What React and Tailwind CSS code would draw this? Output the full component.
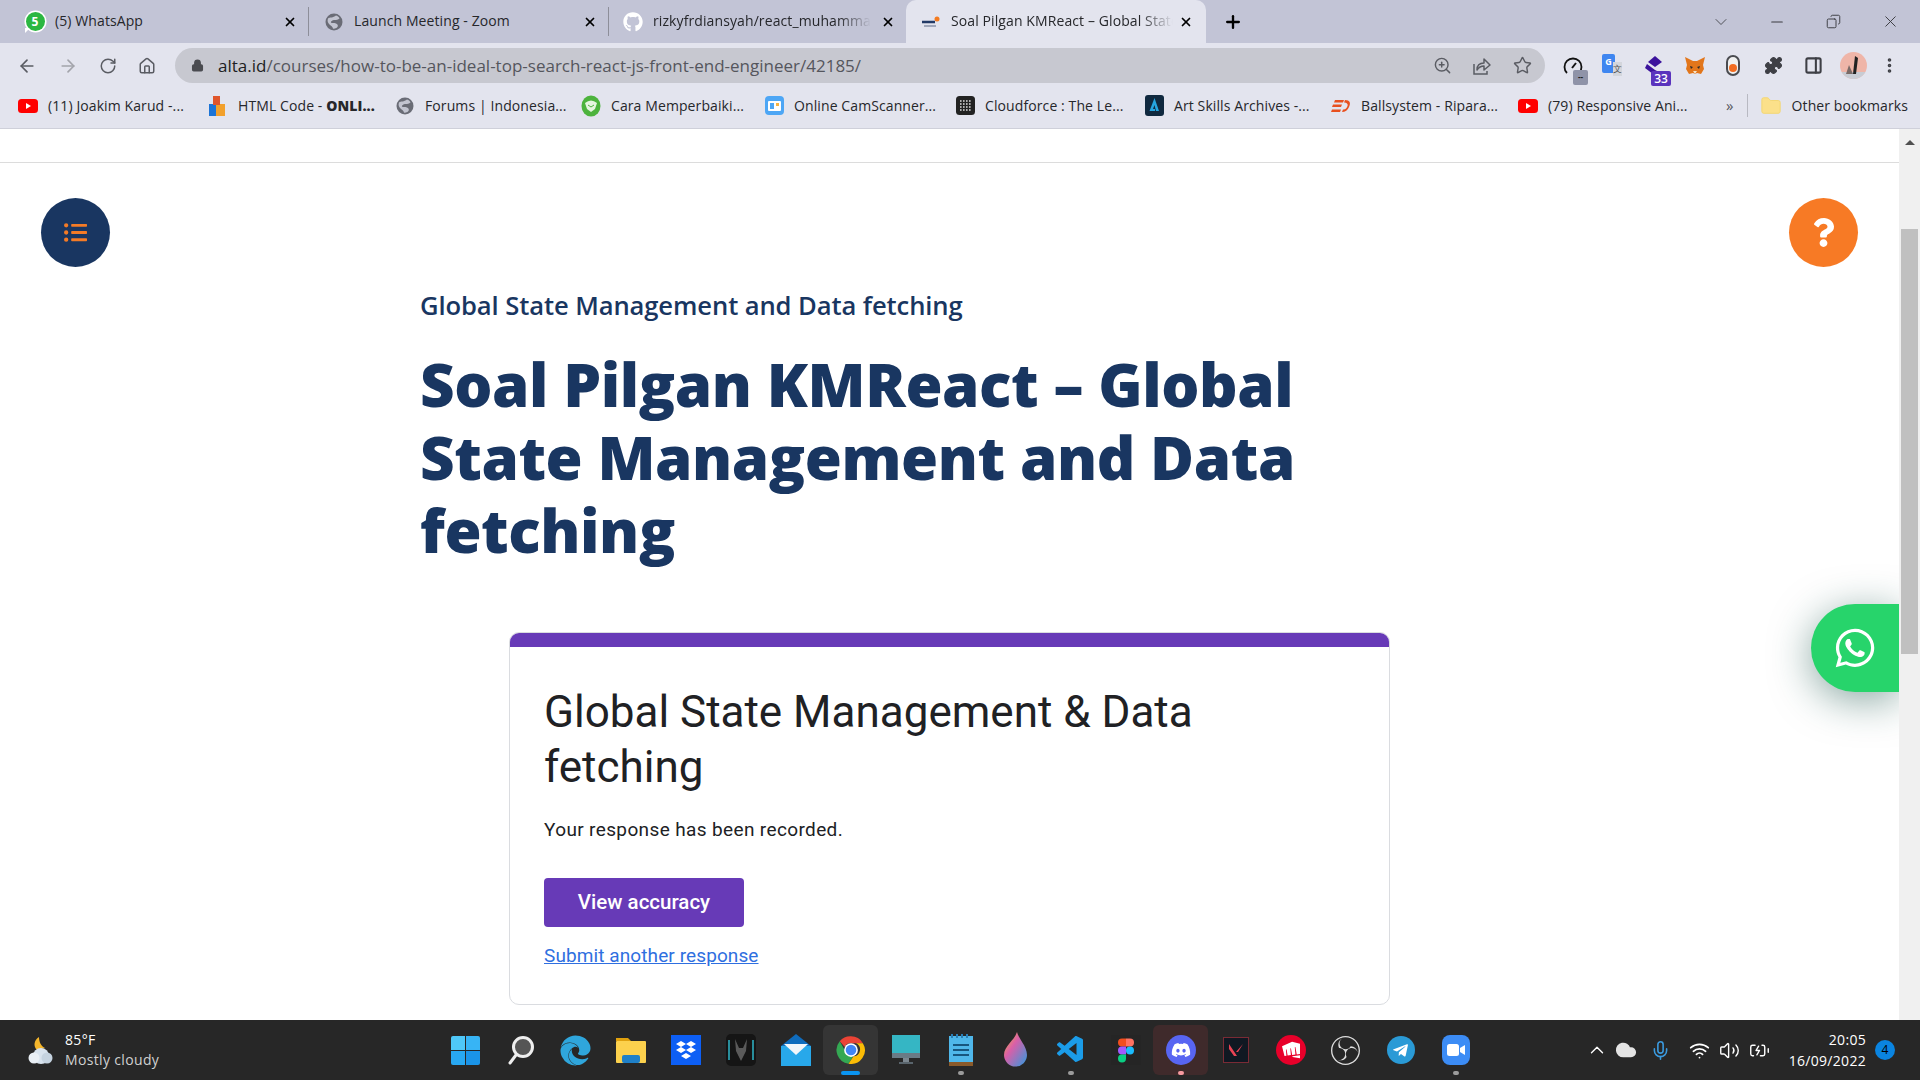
import { ArrowLeft, ArrowRight, RotateCw, Home, Lock, ZoomIn, Star, Puzzle, PanelRight, MoreVertical, ChevronDown, Minus, X, Plus, Copy, Mic, Wifi, Volume2, ChevronUp, Cloud, BatteryCharging, Folder } from 'lucide-react';
import { FaWhatsapp, FaGithub, FaDiscord, FaEdge, FaTelegramPlane, FaQuestion, FaListUl } from 'react-icons/fa';
import { VscVscode } from 'react-icons/vsc';
import { SiObsstudio, SiRiotgames } from 'react-icons/si';

const GlobeDot = ({ size = 18 }) => (
  <svg width={size} height={size} viewBox="0 0 18 18">
    <circle cx="9" cy="9" r="8.500" fill="#6a6c76" />
    <path d="M11 2.500c2 .500 3 1.500 3.500 3-1.500 1-3 1.500-5 1.500S5.500 8.500 6 9.500s3 0 5 1 2.500 2.500 1 4c-1 1-3 1.500-4 1-.5-2-2-2.500-3.500-4S2 8 3 5.500c2-1.500 5-.5 8-3z" fill="#c2c4d0" />
  </svg>
);

const WhatsappBadge = () => (
  <span className="relative flex size-[19px] items-center justify-center rounded-full bg-[#2bb741] text-[12px] font-bold leading-none text-white ring-[1.500px] ring-white">
    5
    <span className="absolute -bottom-[2px] -left-[1px] size-0 border-r-[5px] border-t-[5px] border-r-transparent border-t-white" />
  </span>
);

const YoutubeIcon = () => (
  <svg width="20" height="16" viewBox="0 0 20 16">
    <rect x="0" y="1" width="20" height="14" rx="3.500" fill="#f00" />
    <path d="M8 5l5 3-5 3z" fill="#fff" />
  </svg>
);

const fade = '[mask-image:linear-gradient(to_right,black_85%,transparent)]';

const tabs = [
  { icon: <WhatsappBadge />, label: '(5) WhatsApp', width: 'w-[299px]', gap: 'pl-[15px]', text: '' },
  { icon: <GlobeDot />, label: 'Launch Meeting - Zoom', width: 'w-[300px]', gap: 'pl-[15px]', text: '' },
  { icon: <FaGithub className="size-[20px] text-white" />, label: 'rizkyfrdiansyah/react_muhammad_rizky', width: 'w-[297px]', gap: 'pl-[14px]', text: fade },
];

const bookmarks = [
  { icon: <YoutubeIcon />, label: '(11) Joakim Karud -...', w: 'w-[190px]' },
  { icon: <svg width="20" height="22" viewBox="0 0 20 22"><rect x="1" y="9" width="7" height="12" fill="#1d74d6" /><rect x="8" y="9" width="9" height="12" fill="#f2a02c" /><rect x="5" y="1" width="7" height="9" fill="#e0552b" /></svg>, label: <>HTML Code - <b className="font-extrabold">ONLI...</b></>, w: 'w-[187px]' },
  { icon: <GlobeDot size={18} />, label: 'Forums | Indonesia...', w: 'w-[186px]' },
  { icon: <svg width="20" height="22" viewBox="0 0 20 22"><ellipse cx="10" cy="11" rx="9.500" ry="10.500" fill="#4db33d" /><path d="M4 8q6-5 12 0l-2 6-4 3-4-3z" fill="#e6f5e0" /><path d="M7 10l3 2 3-2" stroke="#4db33d" fill="none" /></svg>, label: 'Cara Memperbaiki...', w: 'w-[183px]' },
  { icon: <svg width="19" height="19" viewBox="0 0 19 19"><rect width="19" height="19" rx="4" fill="#4da6f5" /><rect x="3" y="5" width="13" height="10" rx="1" fill="#fff" /><rect x="5" y="7" width="4" height="6" fill="#4da6f5" /><rect x="11" y="7" width="3" height="3" fill="#f5b342" /></svg>, label: 'Online CamScanner...', w: 'w-[191px]' },
  { icon: <svg width="19" height="19" viewBox="0 0 19 19"><rect width="19" height="19" rx="3.500" fill="#222" /><path d="M4 5h11M4 8h11M4 11h11M4 14h11" stroke="#ddd" strokeWidth="1.600" strokeDasharray="1.600 1.400" /></svg>, label: 'Cloudforce : The Le...', w: 'w-[189px]' },
  { icon: <svg width="19" height="21" viewBox="0 0 19 21"><rect width="19" height="21" rx="3" fill="#10293f" /><path d="M9.500 3L14 16h-3L9.500 10 8 14h2v2H4.500z" fill="#25a5e0" /></svg>, label: 'Art Skills Archives -...', w: 'w-[187px]' },
  { icon: <svg width="20" height="14" viewBox="0 0 20 14"><path d="M4 1h9l-1 2.500H3zM2 5.500h9l-1 2.500H1zM1 10.500h9L9 13H0zM14 1c5 0 6 3 4 7-1 3-4 5-7 5l1-2.500c3 0 3.500-1.500 4.500-3.500 .8-2-1-3.500-3.500-3.500z" fill="#e8501f" /></svg>, label: 'Ballsystem - Ripara...', w: 'w-[187px]' },
  { icon: <YoutubeIcon />, label: '(79) Responsive Ani...', w: 'w-[190px]' },
];

const TaskIcon = ({ children, active, dot }) => (
  <div className={`relative flex h-[50px] w-[55px] items-center justify-center rounded-md ${active === 'chrome' ? 'bg-[#353535]' : ''} ${active === 'discord' ? 'bg-[#3f2a2b]' : ''}`}>
    {children}
    {dot && <span className={`absolute bottom-0 h-[4px] rounded-full ${dot}`} />}
  </div>
);

const ChromeLogo = () => (
  <svg width="30" height="30" viewBox="0 0 48 48">
    <path d="M24 2a22 22 0 0 1 19 11H24a11 11 0 0 0-10 6L6 10A22 22 0 0 1 24 2z" fill="#ea4335" />
    <path d="M6 10l9.500 17a11 11 0 0 0 12 7L20 46A22 22 0 0 1 6 10z" fill="#34a853" />
    <path d="M43 13a22 22 0 0 1-23 33l8-12a11 11 0 0 0 4-21z" fill="#fbbc05" />
    <circle cx="24" cy="24" r="11" fill="#fff" />
    <circle cx="24" cy="24" r="8.500" fill="#4285f4" />
  </svg>
);

const taskbarIcons = [
  { el: <div className="grid size-[29px] grid-cols-2 gap-[1px]"><span className="rounded-tl-[2px] bg-[#4fc8f8]" /><span className="rounded-tr-[2px] bg-[#37b4f5]" /><span className="rounded-bl-[2px] bg-[#28a8f2]" /><span className="rounded-br-[2px] bg-[#1a94e8]" /></div> },
  { el: <svg width="28" height="30" viewBox="0 0 28 30"><circle cx="16" cy="12" r="9.500" fill="#555" stroke="#eee" strokeWidth="3" /><path d="M9 20l-6 8" stroke="#eee" strokeWidth="3" strokeLinecap="round" /></svg> },
  { el: <FaEdge className="size-[31px] text-[#2fa6dc]" /> },
  { el: <svg width="30" height="30" viewBox="0 0 30 30"><path d="M0 3h12l3 3h-15z" fill="#e0a10e" /><rect y="6" width="30" height="22" rx="1" fill="#fcd14d" /><rect x="6" y="20" width="18" height="8" rx="2" fill="#1f80c8" /></svg> },
  { el: <svg width="30" height="30" viewBox="0 0 30 30"><rect width="30" height="30" fill="#0d5ff5" /><path d="M10 6l5 3-5 3-5-3zM20 6l5 3-5 3-5-3zM10 12l5 3-5 3-5-3zM20 12l5 3-5 3-5-3zM15 18l5 3-5 3-5-3z" fill="#fff" /></svg> },
  { el: <svg width="30" height="32" viewBox="0 0 30 32"><rect width="30" height="32" rx="5" fill="#151515" /><path d="M3 6v20M27 6v20" stroke="#2fb6c9" strokeWidth="1.500" /><path d="M9 5l1 12 5 10 5-10 1-12-4 9h-4z" fill="#5a5a5a" /></svg> },
  { el: <svg width="30" height="32" viewBox="0 0 30 32"><path d="M15 0l15 12H0z" fill="#0f6cbd" /><rect y="12" width="30" height="20" fill="#28a8ea" /><path d="M3 10h24l-12 11z" fill="#f2f6fa" /></svg> },
  { el: <ChromeLogo />, active: 'chrome', dot: 'w-[19px] bg-[#0a94f0]' },
  { el: <svg width="28" height="30" viewBox="0 0 28 30"><rect y="0" width="28" height="23" fill="#35b6c4" /><rect y="18" width="28" height="5" fill="#6a7b86" /><rect x="11" y="23" width="6" height="4" fill="#7c8790" /><rect x="7" y="27" width="14" height="2" fill="#59646c" /></svg> },
  { el: <svg width="24" height="33" viewBox="0 0 24 33"><rect y="2" width="24" height="27" fill="#4fb7ea" /><rect y="28" width="24" height="4" fill="#8a5a2b" /><path d="M3 0v4M8 0v4M13 0v4M18 0v4" stroke="#2a7fb5" strokeWidth="2" /><path d="M4 11h16M4 16h16M4 21h16" stroke="#17567f" strokeWidth="2" /></svg>, dot: 'w-[6px] bg-[#9b9b9b]' },
  { el: <svg width="24" height="36" viewBox="0 0 24 36"><defs><linearGradient id="fluent" x1="0" y1="0" x2="1" y2="1"><stop offset="0" stopColor="#f7b733" /><stop offset=".4" stopColor="#d95fa8" /><stop offset="1" stopColor="#2d9be0" /></linearGradient></defs><path d="M13 0c1 6 10 14 10 23a11.500 11.500 0 0 1-23 0C0 14 10 9 13 0z" fill="url(#fluent)" /></svg> },
  { el: <VscVscode className="size-[32px] text-[#1b9ce8]" />, dot: 'w-[6px] bg-[#9b9b9b]' },
  { el: <div className="flex h-[30px] w-[30px] items-center justify-center bg-[#252525]"><svg width="16" height="27" viewBox="0 0 16 24"><path d="M4 0h4v8H4a4 4 0 0 1 0-8z" fill="#f24e1e" /><path d="M8 0h4a4 4 0 0 1 0 8H8z" fill="#ff7262" /><path d="M4 8h4v8H4a4 4 0 0 1 0-8z" fill="#a259ff" /><circle cx="12" cy="12" r="4" fill="#1abcfe" /><path d="M4 16h4v4a4 4 0 1 1-4-4z" fill="#0acf83" /></svg></div> },
  { el: <div className="flex size-[30px] items-center justify-center rounded-full bg-[#5865f2]"><FaDiscord className="size-[20px] text-white" /></div>, active: 'discord', dot: 'w-[6px] bg-[#f79aa0]' },
  { el: <div className="flex size-[26px] items-center justify-center border border-[#7a2b35] bg-[#101822]"><svg width="16" height="14" viewBox="0 0 16 14"><path d="M1 1l8 12H6L1 6zM15 1L10 9H8z" fill="#ea4354" /></svg></div> },
  { el: <div className="flex size-[30px] items-center justify-center rounded-full bg-[#e8002a]"><SiRiotgames className="size-[18px] text-white" /></div> },
  { el: <SiObsstudio className="size-[29px] text-[#dddddd]" /> },
  { el: <div className="flex size-[28px] items-center justify-center rounded-full bg-[#2a9ad6]"><FaTelegramPlane className="size-[17px] text-white" /></div> },
  { el: <div className="flex h-[30px] w-[28px] items-center justify-center rounded-[8px] bg-[#3c8cf5]"><svg width="18" height="12" viewBox="0 0 18 12"><rect width="12" height="12" rx="2.500" fill="#fff" /><path d="M13 4l5-3v10l-5-3z" fill="#fff" /></svg></div>, dot: 'w-[6px] bg-[#9b9b9b]' },
];

function BrowserChrome() {
  return (
    <div className="font-['Open_Sans',sans-serif] text-[#26272b]">
      {/* tab strip */}
      <div className="flex h-[43px] items-center bg-[#c2c4d6] pl-[10px] text-[14px] tracking-[0.1px]">
        {tabs.map((tab, i) => (
          <div key={i} className={`flex h-full items-center ${tab.width} ${tab.gap}`}>
            <div className={`flex h-[29px] w-full items-center gap-[10px] pr-[8px] ${i < 2 ? 'border-r border-[#8d8e99]' : ''}`}>
              <span className="flex w-[20px] shrink-0 justify-center">{tab.icon}</span>
              <span className={`min-w-0 flex-1 overflow-hidden whitespace-nowrap pb-[2px] ${tab.text}`}>{tab.label}</span>
              <X className="mr-[3px] size-[14px] shrink-0 text-black" strokeWidth={3} />
            </div>
          </div>
        ))}
        <div className="flex h-full w-[300px] items-center rounded-t-[10px] bg-[#e3e4ee] pl-[15px] pr-[13px]">
          <svg width="20" height="14" viewBox="0 0 20 14" className="mr-[10px] shrink-0">
            <path d="M1 7h13" stroke="#223a66" strokeWidth="2.500" />
            <circle cx="16" cy="4" r="2.500" fill="#f47b20" />
            <path d="M3 11h12" stroke="#8a93a8" strokeWidth="1.500" />
          </svg>
          <span className={`min-w-0 flex-1 overflow-hidden whitespace-nowrap pb-[2px] ${fade}`}>Soal Pilgan KMReact – Global State Management</span>
          <X className="ml-[6px] size-[14px] shrink-0 text-black" strokeWidth={3} />
        </div>
        <Plus className="ml-[17px] size-[20px] text-black" strokeWidth={2.800} />
        <div className="ml-auto flex items-center text-[#3a3b40]">
          <ChevronDown className="size-[20px]" strokeWidth={1} />
          <Minus className="ml-[37px] size-[18px]" strokeWidth={1.500} />
          <Copy className="ml-[40px] size-[15px] -scale-x-100" strokeWidth={1.500} />
          <X className="ml-[40px] mr-[20px] size-[19px]" strokeWidth={1.200} />
        </div>
      </div>
      {/* toolbar */}
      <div className="flex h-[45px] items-center bg-[#e3e4ee] pl-[17px] text-[#5a5c63]">
        <ArrowLeft className="size-[20px]" strokeWidth={2} />
        <ArrowRight className="ml-[21px] size-[20px] text-[#a3a4ab]" strokeWidth={2} />
        <RotateCw className="ml-[21px] size-[18px]" strokeWidth={2} />
        <Home className="ml-[21px] size-[18px]" strokeWidth={2} />
        <div className="ml-[19px] flex h-[35px] w-[1370px] items-center rounded-full bg-[#c7c8d0] pl-[16px] pr-[9px]">
          <Lock className="size-[13px] fill-[#4a4b50] text-[#4a4b50]" strokeWidth={2.500} />
          <span className="ml-[14px] text-[17px] text-[#55565d]"><span className="text-[#1d1e22]">alta.id</span>/courses/how-to-be-an-ideal-top-search-react-js-front-end-engineer/42185/</span>
          <ZoomIn className="ml-auto size-[19px]" strokeWidth={1.800} />
          <svg width="20" height="20" viewBox="0 0 20 20" fill="none" stroke="currentColor" strokeWidth="1.500" className="ml-[20px]">
            <path d="M2 8v10h13v-3" />
            <path d="M5 14c0-5 3-7 7-7V3l6 6-6 5v-4c-3 0-5 1-7 4z" strokeLinejoin="round" />
          </svg>
          <Star className="ml-[21px] mr-[4px] size-[19px]" strokeWidth={1.800} />
        </div>
        <div className="flex flex-1 items-center text-[#3e3f45]">
          <div className="relative ml-[18px]">
            <svg width="20" height="20" viewBox="0 0 20 20" fill="none" stroke="#111" strokeWidth="1.800"><path d="M4 17A8.500 8.500 0 1 1 16 17" /><path d="M9 12l4-5" strokeWidth="2" /></svg>
            <span className="absolute -bottom-[9px] left-[10px] h-[15px] w-[15px] rounded-[2px] bg-[#8f93a8] text-center text-[8px] font-bold leading-[14px] text-[#222]">--</span>
          </div>
          <div className="relative ml-[19px] flex h-[24px] w-[20px]">
            <span className="h-[19px] w-[13px] rounded-[2px] bg-[#3f86f0] text-center text-[9px] font-bold leading-[16px] text-white">G</span>
            <span className="absolute bottom-[2px] right-0 h-[14px] w-[9px] bg-[#d4d6dc] text-center text-[9px] leading-[14px] text-[#555]">文</span>
          </div>
          <div className="relative ml-[22px]">
            <svg width="22" height="20" viewBox="0 0 22 20"><path d="M11 0l7 6-7 5-7-5z" fill="#3b129c" /><path d="M3 8l8 6 2 1-4 3-8-6z" fill="#3b129c" /></svg>
            <span className="absolute -bottom-[10px] left-[7px] h-[15px] w-[20px] rounded-[2px] bg-[#5a33bd] text-center text-[12px] font-semibold leading-[15px] text-white">33</span>
          </div>
          <svg width="22" height="20" viewBox="0 0 22 20" className="ml-[18px]"><path d="M1 1l8 4h4l8-4-2 8 1 4-3 5-4-1-2 1-2-1-4 1-3-5 1-4z" fill="#e2761b" /><path d="M6 10l3 1-2 2zM16 10l-3 1 2 2z" fill="#2a2a2a" /><path d="M9 15h4l-2 3z" fill="#f5e3c9" /></svg>
          <div className="ml-[20px] flex h-[21px] w-[14px] items-end justify-center rounded-full border-2 border-[#4a4b50] bg-[#f0f0f0] pb-[2px]"><span className="size-[8px] rounded-full bg-[#f26c21]" /></div>
          <Puzzle className="ml-[24px] size-[19px] fill-[#3e3f45]" strokeWidth={1.500} />
          <PanelRight className="ml-[21px] size-[19px]" strokeWidth={2.600} />
          <div className="ml-[17px] flex size-[27px] items-center justify-center overflow-hidden rounded-full bg-[#efb5a8]"><svg width="27" height="27" viewBox="0 0 27 27"><path d="M0 20h27v7H0z" fill="#c8ccd4" /><path d="M15 4l3 2-2 16h-3z" fill="#222" /><path d="M9 13l4 9H6z" fill="#7a6a66" /></svg></div>
          <MoreVertical className="ml-[13px] size-[19px]" strokeWidth={2.600} />
        </div>
      </div>
      {/* bookmarks */}
      <div className="flex h-[41px] items-center border-b border-[#cfd0da] bg-[#e3e4ee] pb-[5px] pl-[18px] text-[14px] tracking-[0.1px]">
        {bookmarks.map((item, i) => (
          <div key={i} className={`flex items-center gap-[10px] whitespace-nowrap ${item.w}`}>
            <span className="flex w-[20px] justify-center">{item.icon}</span>
            <span>{item.label}</span>
          </div>
        ))}
        <span className="ml-[18px] text-[15px] text-[#55565d]">»</span>
        <span className="ml-[13px] h-[23px] w-px bg-[#b8b9c2]" />
        <Folder className="ml-[12px] size-[22px] fill-[#fbe08a] text-[#f3d56f]" strokeWidth={1} />
        <span className="ml-[10px] whitespace-nowrap">Other bookmarks</span>
      </div>
    </div>
  );
}

function PageContent() {
  return (
    <div className="relative min-w-0 flex-1 overflow-hidden bg-white">
      <div className="h-[34px] border-b border-[#dcdcdc]" />
      <div className="pl-[420px] pt-[126px] font-['Open_Sans',sans-serif]">
        <p className="text-[25.600px] font-semibold leading-[34px] tracking-[-0.1px] text-[#193661]">Global State Management and Data fetching</p>
        <h1 className="mt-[25px] w-[900px] text-[60px] font-extrabold leading-[73px] tracking-[-0.4px] text-[#193661]">Soal Pilgan KMReact – Global State Management and Data fetching</h1>
      </div>
      <div className="ml-[509px] mt-[65px] w-[881px] overflow-hidden rounded-[10px] border border-[#dadce0] font-['Roboto',sans-serif]">
        <div className="-mx-px -mt-px h-[15px] bg-[#673ab7]" />
        <div className="px-[34px] pb-[36px] pt-[38px]">
          <h2 className="w-[700px] text-[44px] font-normal leading-[55px] text-[#202124]">Global State Management & Data fetching</h2>
          <p className="mt-[23px] text-[19px] leading-[24px] tracking-[0.37px] text-[#202124]">Your response has been recorded.</p>
          <button className="mt-[36px] block h-[49px] w-[200px] rounded-[4px] bg-[#673ab7] text-[20.500px] font-medium text-white">View accuracy</button>
          <a className="mt-[17px] block text-[19px] leading-[24px] tracking-[0.1px] text-[#2f6fe0] underline">Submit another response</a>
        </div>
      </div>
      <button className="absolute left-[41px] top-[69px] flex size-[69px] items-center justify-center rounded-full bg-[#193661]">
        <FaListUl className="size-[23px] text-[#f47b26]" />
      </button>
      <button className="absolute left-[1789px] top-[69px] flex size-[69px] items-center justify-center rounded-full bg-[#f77a25]">
        <FaQuestion className="size-[29px] text-white" />
      </button>
      <div className="absolute left-[1811px] top-[475px] flex h-[88px] w-[88px] items-center justify-center rounded-l-[44px] bg-[#27d46b] shadow-[0_8px_40px_rgba(20,80,70,0.5)]">
        <FaWhatsapp className="size-[44px] text-white" />
      </div>
    </div>
  );
}

function Scrollbar() {
  return (
    <div className="flex w-[21px] shrink-0 flex-col items-center bg-[#f0f0f0]">
      <div className="mt-[11px] size-0 border-x-[5px] border-b-[5px] border-x-transparent border-b-[#505050]" />
      <div className="mt-[84px] h-[425px] w-[17px] bg-[#c0c0c0]" />
    </div>
  );
}

function Taskbar() {
  return (
    <div className="flex h-[60px] shrink-0 items-center bg-[#272727] font-['Open_Sans',sans-serif] text-white">
      <div className="flex w-[438px] shrink-0 items-center pl-[26px]">
        <svg width="30" height="30" viewBox="0 0 30 30"><path d="M13 2c-5 3-6 9-2 13l8-2c-4-2-6-6-6-11z" fill="#f4b62c" /><circle cx="15" cy="21" r="8" fill="#d8e3ee" /><circle cx="8" cy="23" r="5.500" fill="#e9eff5" /><circle cx="21" cy="23" r="5.500" fill="#c5d3e0" /></svg>
        <div className="ml-[9px] text-[14px] leading-[20px] tracking-[0.35px]">
          <div>85°F</div>
          <div className="text-[#d0d0d0]">Mostly cloudy</div>
        </div>
      </div>
      <div className="flex items-center">
        {taskbarIcons.map((icon, i) => (
          <TaskIcon key={i} active={icon.active} dot={icon.dot}>{icon.el}</TaskIcon>
        ))}
      </div>
      <div className="ml-auto flex items-center pr-[25px]">
        <ChevronUp className="size-[22px]" strokeWidth={1.500} />
        <Cloud className="ml-[7px] size-[22px] fill-[#e4e4e4] text-[#e4e4e4]" />
        <Mic className="ml-[13px] size-[21px] text-[#3b9be0]" strokeWidth={1.800} />
        <Wifi className="ml-[18px] size-[21px]" strokeWidth={2} />
        <Volume2 className="ml-[9px] size-[21px]" strokeWidth={1.600} />
        <BatteryCharging className="ml-[9px] size-[21px]" strokeWidth={1.600} />
        <div className="ml-[19px] text-right text-[14px] leading-[21px] tracking-[0.3px]">
          <div>20:05</div>
          <div>16/09/2022</div>
        </div>
        <span className="ml-[9px] flex h-[20px] w-[20px] items-center justify-center rounded-full bg-[#0a84e0] text-[12px] text-black">4</span>
      </div>
    </div>
  );
}

export default function App() {
  return (
    <div className="flex h-screen w-[1920px] flex-col overflow-hidden">
      <BrowserChrome />
      <div className="flex min-h-0 flex-1">
        <PageContent />
        <Scrollbar />
      </div>
      <Taskbar />
    </div>
  );
}
